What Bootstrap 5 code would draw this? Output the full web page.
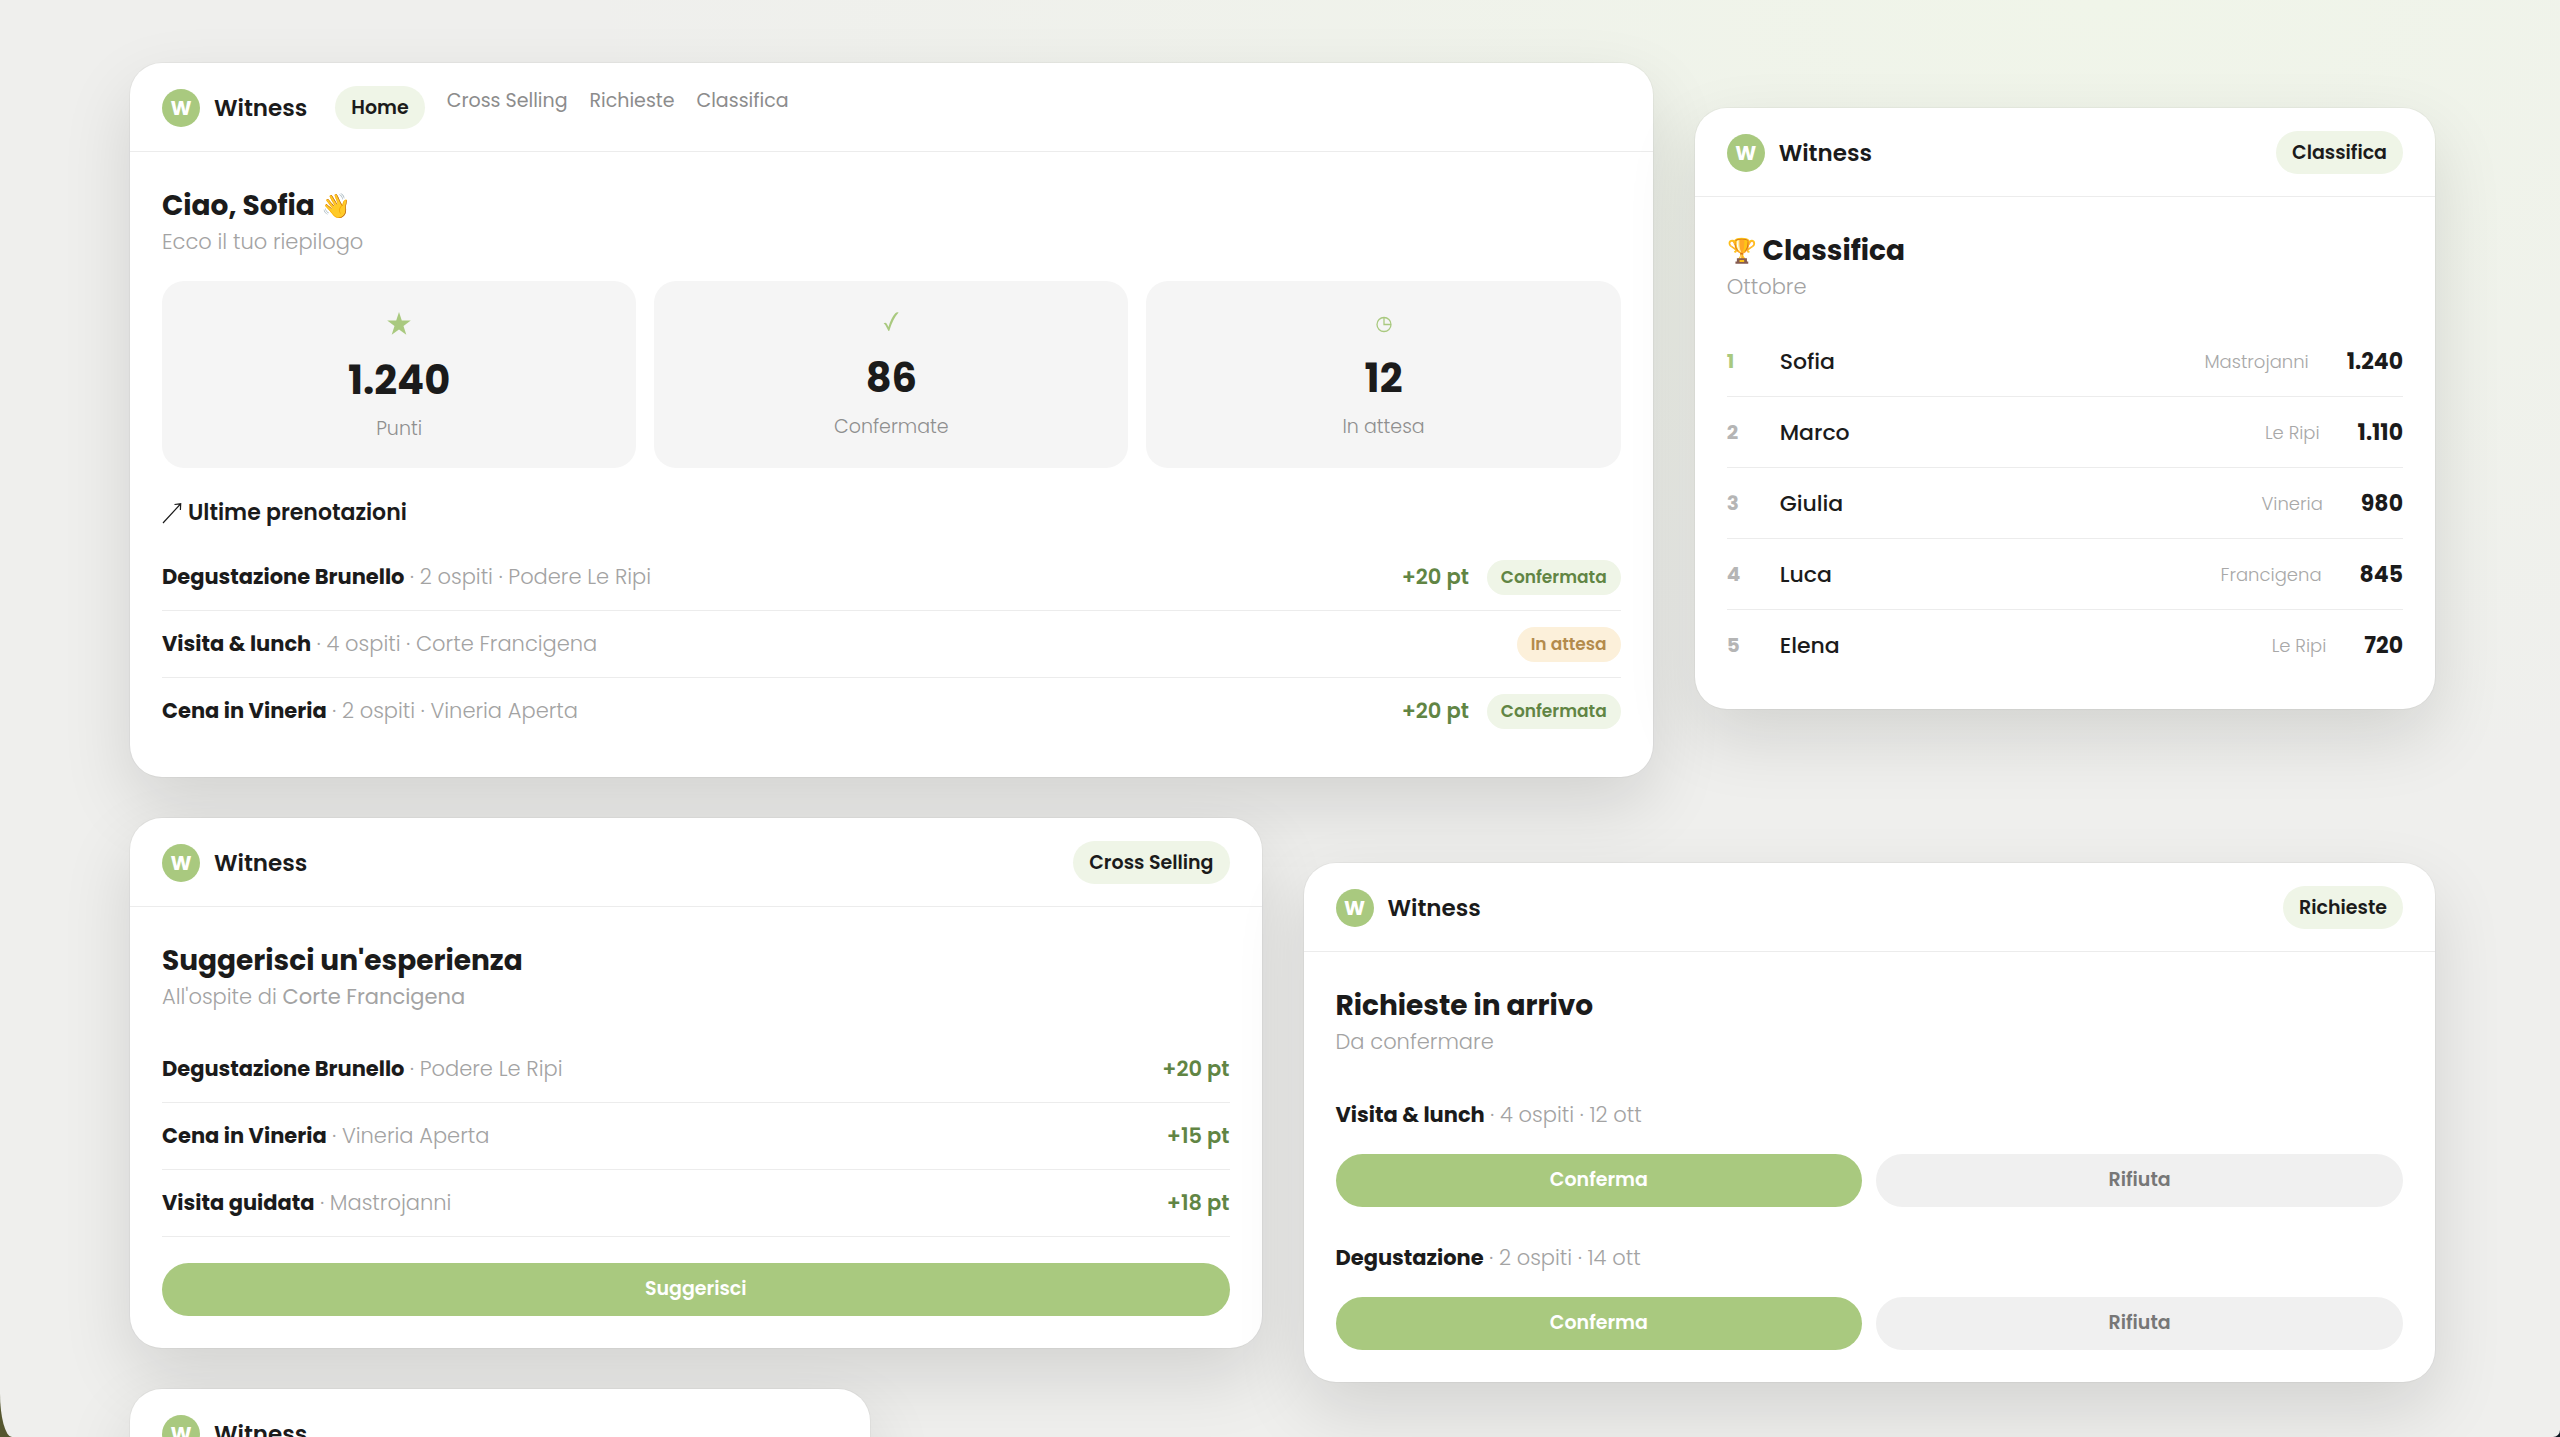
<!DOCTYPE html>
<html lang="it">
<head>
<meta charset="utf-8">
<meta name="viewport" content="width=device-width, initial-scale=1">
<title>Witness</title>
<link href="https://cdn.jsdelivr.net/npm/bootstrap@5.3.0/dist/css/bootstrap.min.css" rel="stylesheet">
<style>
  :root { --green: #a9c97f; --green-dark: #618544; --green-soft: #eff5e7; --ink: #1b1b1b; --muted: #a3a3a3; --line: #ececec; }
  body { font-family: Poppins, Inter, "Open Sans", sans-serif; color: var(--ink); background: linear-gradient(90deg, #55562f, #0c1620); }
  .stage { height: 100vh; overflow: hidden; padding: 63px 125px 0 130px; background: radial-gradient(ellipse 60% 55% at 82% 0, #f0f5e9, rgba(240, 245, 233, 0) 100%), #efefed; border-radius: 0 0 7px 12px / 0 0 7px 44px; }
  .board { --bs-gutter-x: 42px; row-gap: 41px; }
  .lowered { margin-top: 45px; margin-bottom: -45px; }
  .panel { border: 0; border-radius: 32px; box-shadow: 0 0 0 1px rgba(0, 0, 0, .03), 0 28px 70px rgba(0, 0, 0, .12); }
  .panel-head { padding: 23px 32px 22px; border-bottom: 1px solid var(--line); min-height: 89px; }
  .panel-body { padding: 33px 32px 32px; }
  .logo { width: 38px; height: 38px; background: var(--green); font-size: 20px; font-weight: 700; }
  .brand { gap: 14px; font-size: 23px; font-weight: 600; line-height: 38px; color: var(--ink); }
  .menu { gap: 22px; margin-left: 28px; font-size: 19px; line-height: 29px; }
  .menu a { color: #8c8c8c; }
  .menu .pill, .pill { padding: 7px 16px; font-size: 19px; line-height: 29px; font-weight: 600; color: var(--ink); background: var(--green-soft); }
  .title { font-size: 28px; line-height: 42px; font-weight: 700; margin: 0; }
  .emoji { font-size: 24px; line-height: 1; vertical-align: 1px; }
  .subtitle { font-size: 21px; line-height: 30px; font-weight: 300; color: var(--muted); margin: 0 0 24px; }
  .subtitle b { font-weight: 400; }
  .stats { gap: 18px; }
  .stat { flex: 1 1 0; padding: 24px; border-radius: 22px; background: #f5f5f5; color: var(--green); }
  .stat svg { display: block; margin: 0 auto 12px; }
  .figure-no { font-size: 40px; line-height: 50px; font-weight: 700; color: var(--ink); }
  .caption { font-size: 19px; line-height: 30px; font-weight: 300; color: #8f8f8f; margin-top: 9px; }
  .section { font-size: 22px; line-height: 36px; font-weight: 600; margin: 27px 0 13px; gap: 6px; }
  .line { min-height: 67px; border-bottom: 1px solid var(--line); font-size: 21px; }
  .list-unstyled:not(.ruled) > .line:last-child { border-bottom-color: transparent; }
  .line strong { font-weight: 700; }
  .line .info { font-weight: 300; color: var(--muted); }
  .points { font-size: 21px; font-weight: 600; color: var(--green-dark); }
  .points + .status { margin-left: 18px; }
  .status { padding: 3px 14px; font-size: 17px; line-height: 29px; font-weight: 600; }
  .status.ok { color: var(--green-dark); background: var(--green-soft); }
  .status.wait { color: #b38b4c; background: #fcf0da; }
  .rank { min-height: 71px; }
  .place { width: 53px; font-size: 20px; font-weight: 700; color: #b5b5b5; }
  .rank:first-child .place { color: var(--green); }
  .person { font-size: 22px; font-weight: 500; }
  .team { font-size: 18px; font-weight: 300; color: #a8a8a8; margin-right: 38px; }
  .score { font-size: 22px; font-weight: 700; }
  .action { border: 0; border-radius: 27px; height: 53px; padding: 0 24px; font-size: 19px; font-weight: 600; color: #fff; background: var(--green); }
  .action.quiet { color: #777; background: #f0f0f0; }
  .action.last { margin-top: 26px; }
  .request .line { border-bottom: 0; }
  .request .answers { gap: 14px; margin-top: 6px; }
  .request + .request { margin-top: 17px; }
</style>
<script src="https://cdn.jsdelivr.net/npm/bootstrap@5.3.0/dist/js/bootstrap.bundle.min.js"></script>
</head>
<body>
<main class="stage">
  <div class="row board align-items-start">

    <div class="col-8">
      <section class="card panel">
        <header class="panel-head d-flex align-items-center">
          <a class="brand d-flex align-items-center text-decoration-none" href="#"><span class="logo rounded-circle d-flex align-items-center justify-content-center text-white">W</span>Witness</a>
          <nav class="menu d-flex align-items-start">
            <a class="pill rounded-pill text-decoration-none" href="#">Home</a>
            <a class="text-decoration-none" href="#">Cross Selling</a>
            <a class="text-decoration-none" href="#">Richieste</a>
            <a class="text-decoration-none" href="#">Classifica</a>
          </nav>
        </header>
        <div class="panel-body">
          <h1 class="title">Ciao, Sofia <span class="emoji">👋</span></h1>
          <p class="subtitle">Ecco il tuo riepilogo</p>
          <div class="stats d-flex text-center">
            <div class="stat">
              <svg width="24" height="38" viewBox="0 0 24 38" fill="currentColor" aria-hidden="true"><path d="M12 7l2.800 8.600h9L16.500 21l2.800 8.700L12 24.400l-7.300 5.300L7.500 21 .2 15.600h9z"/></svg>
              <div class="figure-no">1.240</div>
              <div class="caption">Punti</div>
            </div>
            <div class="stat">
              <svg width="16" height="36" viewBox="0 0 16 36" fill="currentColor" aria-hidden="true"><path d="M.6 18.500q1.800-1.600 3.200.2l1.700 3.300Q8 13 12.300 8.300 13.600 7 15.600 7.400 10 13.500 6.400 25.400q-.6 1-1.200 0L2.600 20.500Q1.800 19 .6 18.500z"/></svg>
              <div class="figure-no">86</div>
              <div class="caption">Confermate</div>
            </div>
            <div class="stat">
              <svg width="16" height="36" viewBox="0 0 16 36" fill="none" stroke="currentColor" stroke-width="1.300" aria-hidden="true"><circle cx="8" cy="19.500" r="7"/><path d="M8 12.500v7h7"/></svg>
              <div class="figure-no">12</div>
              <div class="caption">In attesa</div>
            </div>
          </div>
          <h2 class="section d-flex align-items-center"><svg width="20" height="22" viewBox="0 0 20 22" fill="none" stroke="currentColor" stroke-width="1.200" aria-hidden="true"><path d="M1 21L18.500 2M12.500 2.500l6.200-.7-.3 6.200"/></svg>Ultime prenotazioni</h2>
          <ul class="list-unstyled m-0">
            <li class="line d-flex align-items-center"><div class="me-auto"><strong>Degustazione Brunello</strong> <span class="info">· 2 ospiti · Podere Le Ripi</span></div><span class="points">+20 pt</span><span class="status ok rounded-pill">Confermata</span></li>
            <li class="line d-flex align-items-center"><div class="me-auto"><strong>Visita &amp; lunch</strong> <span class="info">· 4 ospiti · Corte Francigena</span></div><span class="status wait rounded-pill">In attesa</span></li>
            <li class="line d-flex align-items-center"><div class="me-auto"><strong>Cena in Vineria</strong> <span class="info">· 2 ospiti · Vineria Aperta</span></div><span class="points">+20 pt</span><span class="status ok rounded-pill">Confermata</span></li>
          </ul>
        </div>
      </section>
    </div>

    <div class="col-4 lowered">
      <section class="card panel">
        <header class="panel-head d-flex align-items-center justify-content-between">
          <a class="brand d-flex align-items-center text-decoration-none" href="#"><span class="logo rounded-circle d-flex align-items-center justify-content-center text-white">W</span>Witness</a>
          <a class="pill rounded-pill text-decoration-none" href="#">Classifica</a>
        </header>
        <div class="panel-body pb-4">
          <h2 class="title"><span class="emoji">🏆</span> Classifica</h2>
          <p class="subtitle">Ottobre</p>
          <ol class="list-unstyled mb-1">
            <li class="line rank d-flex align-items-center"><span class="place">1</span><span class="person me-auto">Sofia</span><span class="team">Mastrojanni</span><span class="score">1.240</span></li>
            <li class="line rank d-flex align-items-center"><span class="place">2</span><span class="person me-auto">Marco</span><span class="team">Le Ripi</span><span class="score">1.110</span></li>
            <li class="line rank d-flex align-items-center"><span class="place">3</span><span class="person me-auto">Giulia</span><span class="team">Vineria</span><span class="score">980</span></li>
            <li class="line rank d-flex align-items-center"><span class="place">4</span><span class="person me-auto">Luca</span><span class="team">Francigena</span><span class="score">845</span></li>
            <li class="line rank d-flex align-items-center"><span class="place">5</span><span class="person me-auto">Elena</span><span class="team">Le Ripi</span><span class="score">720</span></li>
          </ol>
        </div>
      </section>
    </div>

    <div class="col-6">
      <section class="card panel">
        <header class="panel-head d-flex align-items-center justify-content-between">
          <a class="brand d-flex align-items-center text-decoration-none" href="#"><span class="logo rounded-circle d-flex align-items-center justify-content-center text-white">W</span>Witness</a>
          <a class="pill rounded-pill text-decoration-none" href="#">Cross Selling</a>
        </header>
        <div class="panel-body">
          <h2 class="title">Suggerisci un'esperienza</h2>
          <p class="subtitle">All'ospite di <b>Corte Francigena</b></p>
          <ul class="list-unstyled ruled m-0">
            <li class="line d-flex align-items-center justify-content-between"><div><strong>Degustazione Brunello</strong> <span class="info">· Podere Le Ripi</span></div><span class="points">+20 pt</span></li>
            <li class="line d-flex align-items-center justify-content-between"><div><strong>Cena in Vineria</strong> <span class="info">· Vineria Aperta</span></div><span class="points">+15 pt</span></li>
            <li class="line d-flex align-items-center justify-content-between"><div><strong>Visita guidata</strong> <span class="info">· Mastrojanni</span></div><span class="points">+18 pt</span></li>
          </ul>
          <button type="button" class="action last d-block w-100">Suggerisci</button>
        </div>
      </section>
    </div>

    <div class="col-6 lowered">
      <section class="card panel">
        <header class="panel-head d-flex align-items-center justify-content-between">
          <a class="brand d-flex align-items-center text-decoration-none" href="#"><span class="logo rounded-circle d-flex align-items-center justify-content-center text-white">W</span>Witness</a>
          <a class="pill rounded-pill text-decoration-none" href="#">Richieste</a>
        </header>
        <div class="panel-body">
          <h2 class="title">Richieste in arrivo</h2>
          <p class="subtitle">Da confermare</p>
          <div class="request">
            <div class="line d-flex align-items-center"><div><strong>Visita &amp; lunch</strong> <span class="info">· 4 ospiti · 12 ott</span></div></div>
            <div class="answers d-flex"><button type="button" class="action flex-fill w-50">Conferma</button><button type="button" class="action quiet flex-fill w-50">Rifiuta</button></div>
          </div>
          <div class="request">
            <div class="line d-flex align-items-center"><div><strong>Degustazione</strong> <span class="info">· 2 ospiti · 14 ott</span></div></div>
            <div class="answers d-flex"><button type="button" class="action flex-fill w-50">Conferma</button><button type="button" class="action quiet flex-fill w-50">Rifiuta</button></div>
          </div>
        </div>
      </section>
    </div>

    <div class="col-4">
      <section class="card panel">
        <header class="panel-head d-flex align-items-center justify-content-between">
          <a class="brand d-flex align-items-center text-decoration-none" href="#"><span class="logo rounded-circle d-flex align-items-center justify-content-center text-white">W</span>Witness</a>
        </header>
      </section>
    </div>

  </div>
</main>
</body>
</html>
